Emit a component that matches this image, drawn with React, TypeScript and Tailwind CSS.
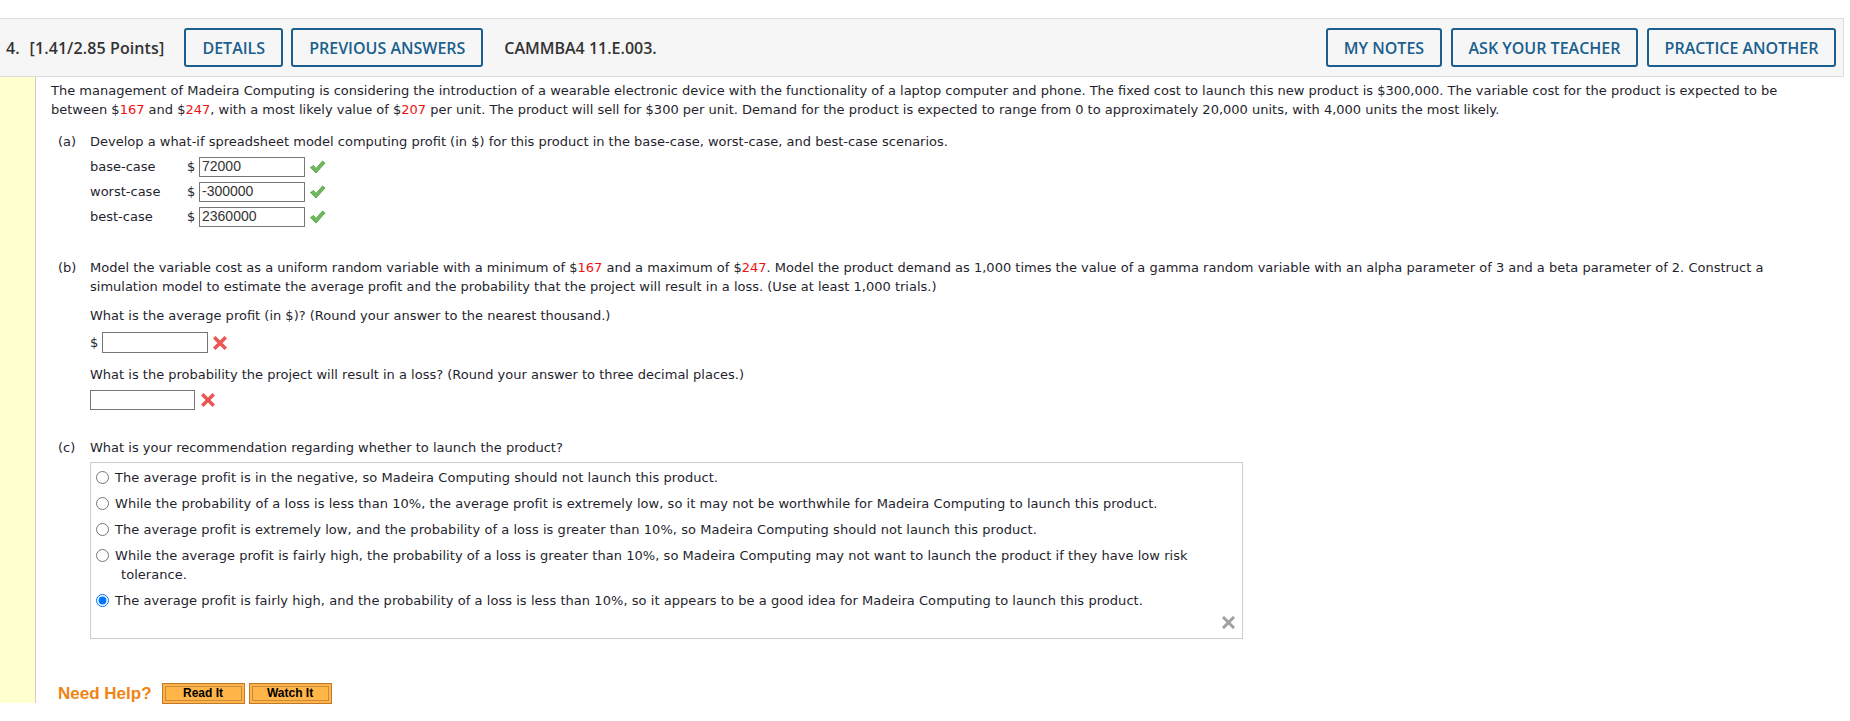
import React from "react";

const body = "font-['DejaVu_Sans',Verdana,sans-serif] text-[13px] leading-[19px] text-[#1f1f2e]";

const Red = ({ children }: { children: React.ReactNode }) => (
  <span className="text-[#ee1111]">{children}</span>
);

const Check = () => (
  <svg width="17" height="16" viewBox="0 0 17 16" className="shrink-0">
    <path
      d="M1.5 8.5 L4.5 6.5 L7 9.5 L13.5 2 L16 4 L7 14 Z"
      fill="#6dbb5a"
      stroke="#4c9a40"
      strokeWidth="0.8"
      strokeLinejoin="round"
    />
  </svg>
);

const RedX = () => (
  <svg width="14" height="14" viewBox="0 0 14 14" className="shrink-0">
    <path d="M2.5 2.5 L11.5 11.5 M11.5 2.5 L2.5 11.5" stroke="#ee5555" strokeWidth="3.6" strokeLinecap="square" />
  </svg>
);

const GreyX = () => (
  <svg width="13" height="13" viewBox="0 0 13 13">
    <path d="M2 2 L11 11 M11 2 L2 11" stroke="#a0a0a0" strokeWidth="3" strokeLinecap="square" />
  </svg>
);

const HeadBtn = ({ label, w }: { label: string; w: string }) => (
  <div
    className={`${w} h-[39px] flex items-center justify-center rounded-[3px] border-2 border-[#1a5f8e] text-[#1a5f8e] whitespace-nowrap`}
  >
    {label}
  </div>
);

const answers = [
  { label: "base-case", value: "72000" },
  { label: "worst-case", value: "-300000" },
  { label: "best-case", value: "2360000" },
];

const options = [
  "The average profit is in the negative, so Madeira Computing should not launch this product.",
  "While the probability of a loss is less than 10%, the average profit is extremely low, so it may not be worthwhile for Madeira Computing to launch this product.",
  "The average profit is extremely low, and the probability of a loss is greater than 10%, so Madeira Computing should not launch this product.",
  "While the average profit is fairly high, the probability of a loss is greater than 10%, so Madeira Computing may not want to launch the product if they have low risk",
  "The average profit is fairly high, and the probability of a loss is less than 10%, so it appears to be a good idea for Madeira Computing to launch this product.",
];

const HelpBtn = ({ label, w }: { label: string; w: string }) => (
  <div className={`${w} h-[21px] border border-[#c0782e] bg-[#ffb547] p-[2px]`}>
    <div className="h-full border border-[#c98a3c] flex items-center justify-center font-['Liberation_Sans',Arial,sans-serif] font-bold text-[12px] text-black">
      {label}
    </div>
  </div>
);

export default function App() {
  return (
    <div className="w-[1850px] h-[721px] bg-white overflow-hidden">
      <div className="h-[18px]" />
      {/* question header */}
      <div className="w-[1844px] h-[59px] bg-[#f6f6f6] border-t border-b border-r border-[#dcdcdc] flex items-center font-['Open_Sans',sans-serif] font-semibold text-[16px]">
        <span className="ml-[6px] text-[#333]">4.</span>
        <span className="ml-[10px] text-[#333] tracking-[0.1px]">[1.41/2.85 Points]</span>
        <div className="ml-[20px] flex gap-[8px]">
          <HeadBtn label="DETAILS" w="w-[99px]" />
          <HeadBtn label="PREVIOUS ANSWERS" w="w-[192px]" />
        </div>
        <span className="ml-[21px] text-[#333]">CAMMBA4 11.E.003.</span>
        <div className="ml-auto mr-[7px] flex gap-[9px]">
          <HeadBtn label="MY NOTES" w="w-[116px]" />
          <HeadBtn label="ASK YOUR TEACHER" w="w-[187px]" />
          <HeadBtn label="PRACTICE ANOTHER" w="w-[189px]" />
        </div>
      </div>

      <div className="flex h-[626px]">
        <div className="w-[36px] shrink-0 bg-[#ffffd0] border-r border-[#d0d0c0]" />
        <div className={`${body} pl-[15px] pt-[4px] flex-1`}>
          <p>
            The management of Madeira Computing is considering the introduction of a wearable electronic device with the functionality of a laptop computer and phone. The fixed cost to launch this new product is $300,000. The variable cost for the product is expected to be
            <br />
            between $<Red>167</Red> and $<Red>247</Red>, with a most likely value of $<Red>207</Red> per unit. The product will sell for $300 per unit. Demand for the product is expected to range from 0 to approximately 20,000 units, with 4,000 units the most likely.
          </p>

          {/* (a) */}
          <div className="mt-[13px] ml-[7px] flex">
            <span className="w-[32px] shrink-0">(a)</span>
            <div>
              <p>Develop a what-if spreadsheet model computing profit (in $) for this product in the base-case, worst-case, and best-case scenarios.</p>
              <div className="mt-[3px]">
                {answers.map((a) => (
                  <div key={a.label} className="h-[25px] flex items-center">
                    <span className="w-[97px]">{a.label}</span>
                    <span className="w-[12px]">$</span>
                    <div className="w-[106px] h-[20px] border border-[#767676] bg-white flex items-center pl-[2px] font-['Liberation_Sans',Arial,sans-serif] text-[14px] text-[#333]">
                      {a.value}
                    </div>
                    <span className="ml-[4px]">
                      <Check />
                    </span>
                  </div>
                ))}
              </div>
            </div>
          </div>

          {/* (b) */}
          <div className="mt-[29px] ml-[7px] flex">
            <span className="w-[32px] shrink-0">(b)</span>
            <div>
              <p>
                Model the variable cost as a uniform random variable with a minimum of $<Red>167</Red> and a maximum of $<Red>247</Red>. Model the product demand as 1,000 times the value of a gamma random variable with an alpha parameter of 3 and a beta parameter of 2. Construct a
                <br />
                simulation model to estimate the average profit and the probability that the project will result in a loss. (Use at least 1,000 trials.)
              </p>
              <p className="mt-[10px]">What is the average profit (in $)? (Round your answer to the nearest thousand.)</p>
              <div className="mt-[7px] h-[21px] flex items-center">
                <span className="w-[12px]">$</span>
                <div className="w-[106px] h-[21px] border border-[#767676] bg-white" />
                <span className="ml-[5px]">
                  <RedX />
                </span>
              </div>
              <p className="mt-[12px]">What is the probability the project will result in a loss? (Round your answer to three decimal places.)</p>
              <div className="mt-[6px] h-[20px] flex items-center">
                <div className="w-[105px] h-[20px] border border-[#767676] bg-white" />
                <span className="ml-[6px]">
                  <RedX />
                </span>
              </div>
            </div>
          </div>

          {/* (c) */}
          <div className="mt-[28px] ml-[7px] flex">
            <span className="w-[32px] shrink-0">(c)</span>
            <div>
              <p>What is your recommendation regarding whether to launch the product?</p>
              <div className="mt-[5px] w-[1153px] h-[177px] border border-[#cccccc] pl-[5px] pt-[5px] pr-[6px] flex flex-col">
                <div className="flex flex-col gap-[7px]">
                  {options.map((o, i) => (
                    <div key={i} className="flex">
                      <input
                        type="radio"
                        readOnly
                        checked={i === 4}
                        className="m-0 mt-[3px] w-[13px] h-[13px] shrink-0"
                      />
                      <div className="ml-[6px] tracking-[0.05px]">
                        <p>{o}</p>
                        {i === 3 && <p className="ml-[6px]">tolerance.</p>}
                      </div>
                    </div>
                  ))}
                </div>
                <div className="mt-auto mb-[9px] self-end mr-[1px]">
                  <GreyX />
                </div>
              </div>
            </div>
          </div>

          <div className="mt-[44px] ml-[7px] flex items-center">
            <span className="font-['Liberation_Sans',Arial,sans-serif] font-bold text-[17px] text-[#ef8413]">Need Help?</span>
            <div className="ml-[10px] flex gap-[4px]">
              <HelpBtn label="Read It" w="w-[83px]" />
              <HelpBtn label="Watch It" w="w-[83px]" />
            </div>
          </div>
        </div>
      </div>
    </div>
  );
}
